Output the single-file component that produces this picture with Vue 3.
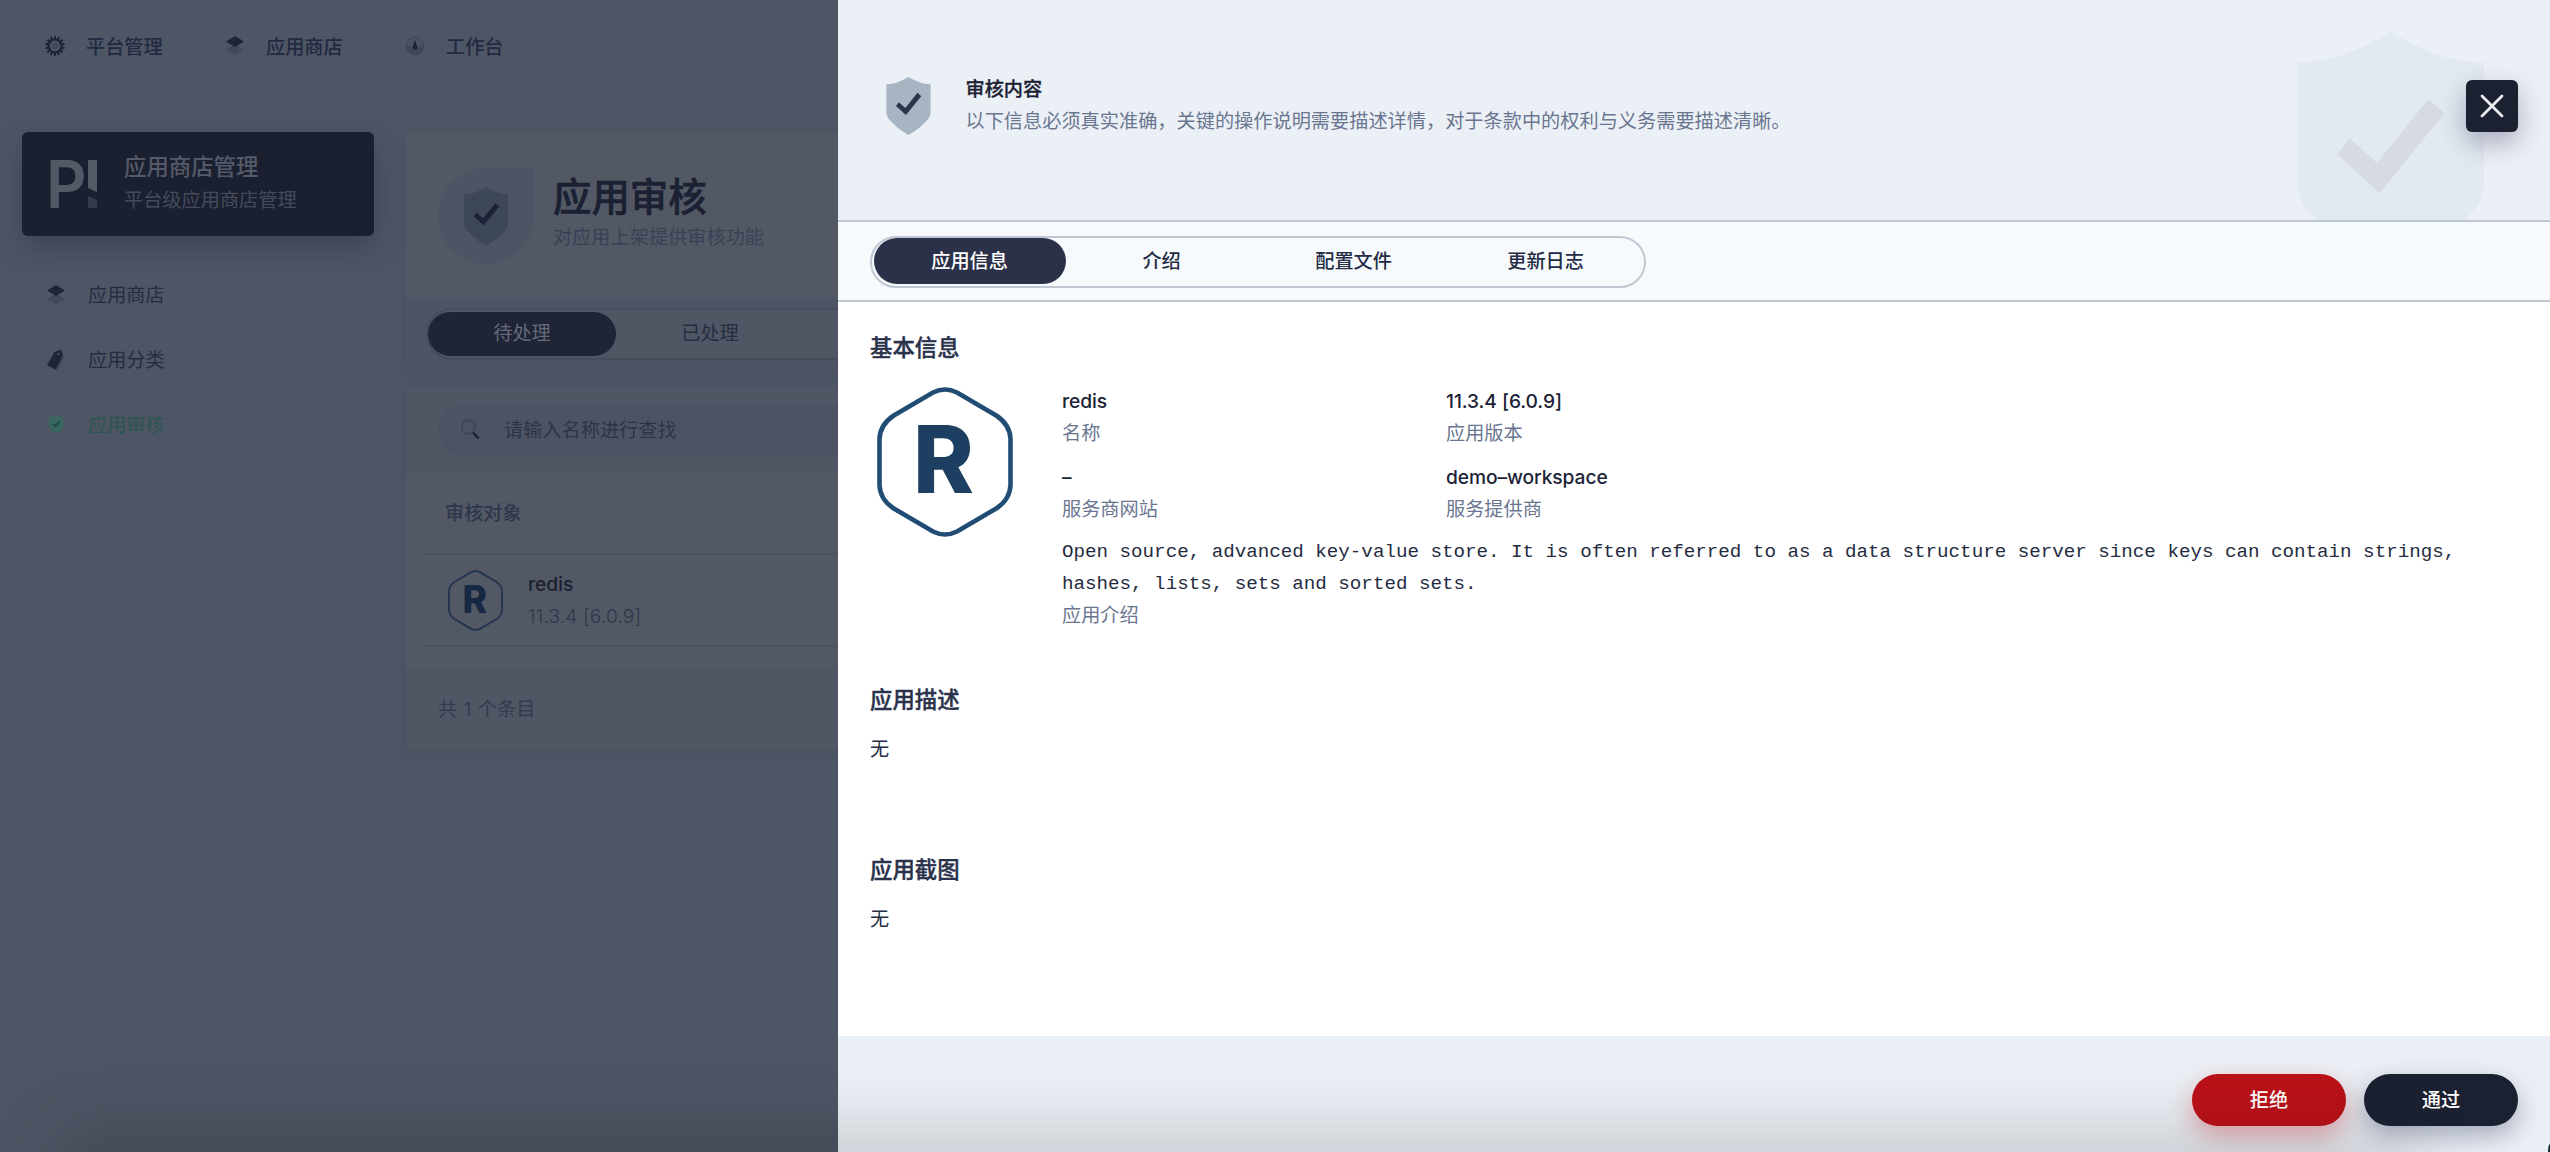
<script setup>
import { h, ref } from 'vue'

const shieldPath =
  'M50 0C38 7 25 13 16 14.6C10 15.8 5 16 0 16.6V81C0 88 4 94.5 10.9 101C20 112 38 125 50 131.3C62 125 80 112 89.1 101C96 94.5 100 88 100 81V16.6C95 16 90 15.8 84 14.6C75 13 62 7 50 0Z'

const ShieldIcon = () =>
  h('svg', { viewBox: '0 0 100 131.3' }, [
    h('path', { d: shieldPath, fill: 'var(--shield)' }),
    h('path', {
      d: 'M21.6 65.4L28.2 56.9L42.8 70.1L70.4 35.8L78.8 43.5L44.2 86.3Z',
      fill: 'var(--check)'
    })
  ])

const LayersIcon = () =>
  h('svg', { viewBox: '0 0 18 20', width: 18, height: 20 }, [
    h('path', { d: 'M9 8.6L18 14L9 19.4L0 14Z', fill: '#414a5b' }),
    h('path', { d: 'M9 0L18 5.5L9 11L0 5.5Z', fill: '#1d2537' })
  ])

const RedisLogo = () =>
  h('svg', { viewBox: '0 0 136 150' }, [
    h('path', {
      d: 'M56 5.5Q68 -.5 80 5.5L120 29Q133 38 133.500 52V98Q133 112 120 121L80 144.500Q68 150.500 56 144.500L16 121Q3 112 2.500 98V52Q3 38 16 29Z',
      fill: 'none',
      stroke: 'var(--hex)',
      'stroke-width': 'var(--hex-w)'
    }),
    h(
      'text',
      {
        x: 66.5,
        y: 105.5,
        'text-anchor': 'middle',
        'font-family': 'Inter, sans-serif',
        'font-weight': 800,
        'font-size': 94,
        textLength: 61,
        lengthAdjust: 'spacingAndGlyphs',
        fill: 'var(--hex-letter)'
      },
      'R'
    )
  ])

const tabs = ['应用信息', '介绍', '配置文件', '更新日志']
const activeTab = ref(0)
const fields = [
  { value: 'redis', label: '名称' },
  { value: '11.3.4 [6.0.9]', label: '应用版本' },
  { value: '–', label: '服务商网站' },
  { value: 'demo–workspace', label: '服务提供商' }
]
const teeth = Array.from({ length: 14 }, (_, i) => (i * 360) / 14)
</script>

<template>
  <div class="screen">
    <header class="topnav">
      <a class="nav-item">
        <svg class="nav-icon" viewBox="-10 -10 20 20">
          <rect v-for="a in teeth" :key="a" x="-1" y="-9.8" width="2" height="4" fill="#1a2234" :transform="`rotate(${a})`" />
          <circle r="6.4" fill="#4e5564" stroke="#1a2234" stroke-width="2" />
          <circle r="3.4" fill="#414a5a" />
        </svg>
        <span>平台管理</span>
      </a>
      <a class="nav-item">
        <span class="nav-icon center"><LayersIcon /></span>
        <span>应用商店</span>
      </a>
      <a class="nav-item">
        <svg class="nav-icon" viewBox="0 0 20 20">
          <circle cx="10" cy="10" r="8.6" fill="#4b5363" stroke="#3e4858" stroke-width="1.2" />
          <path d="M1.200 10H18.800A8.800 8.800 0 0 1 1.200 10Z" fill="#3e4858" />
          <path d="M10 3.800L12.100 10.500A2.300 2.300 0 1 1 7.900 10.500Z" fill="#1b2234" />
        </svg>
        <span>工作台</span>
      </a>
    </header>

    <div class="body">
      <aside class="sidebar">
        <div class="brand">
          <svg class="brand-logo" viewBox="-8 -6 54 60" width="54" height="60">
            <text x="-5" y="48" font-family="Inter, sans-serif" font-weight="600" font-size="66" textLength="40.5" lengthAdjust="spacingAndGlyphs" fill="#545967">P</text>
            <path d="M37 0H46V32L37 28Z" fill="#545967" />
            <path d="M37 36L46 40V48H37Z" fill="#353b4b" />
          </svg>
          <div class="brand-text">
            <div class="brand-title">应用商店管理</div>
            <div class="brand-sub">平台级应用商店管理</div>
          </div>
        </div>
        <nav class="menu">
          <a class="menu-item"><span class="menu-icon"><LayersIcon /></span>应用商店</a>
          <a class="menu-item">
            <span class="menu-icon">
              <svg viewBox="0 0 18 22" width="18" height="22">
                <path d="M13.500 1L17 8.500L10 22L4 19Z" fill="#40495a" />
                <path d="M7.500 3L14 .5L16 6.500L8.700 20.500L0 16.200Z" fill="#1d2537" />
                <circle cx="11.500" cy="5" r="1.100" fill="#565c6a" />
              </svg>
            </span>应用分类
          </a>
          <a class="menu-item active"><span class="menu-icon"><ShieldIcon class="shield-xs" /></span>应用审核</a>
        </nav>
      </aside>

      <main class="main">
        <section class="card head-card">
          <div class="page-head">
            <div class="drop"><ShieldIcon class="shield-sm" /></div>
            <div class="page-title">
              <h1>应用审核</h1>
              <p>对应用上架提供审核功能</p>
            </div>
          </div>
          <div class="page-tabs">
            <div class="page-tabs-pill">
              <span class="on">待处理</span>
              <span>已处理</span>
            </div>
          </div>
        </section>

        <section class="card list-card">
          <div class="search-bar">
            <div class="search">
              <svg viewBox="0 0 20 22" width="20" height="22">
                <circle cx="8.500" cy="8" r="6.800" fill="none" stroke="#3e4656" stroke-width="1.700" />
                <path d="M13 13.500L18.500 19.500" stroke="#1a2032" stroke-width="2.200" />
              </svg>
              <span>请输入名称进行查找</span>
            </div>
          </div>
          <div class="table">
            <div class="thead">审核对象</div>
            <div class="row">
              <RedisLogo class="logo-sm" />
              <div>
                <div class="row-name">redis</div>
                <div class="row-ver">11.3.4 [6.0.9]</div>
              </div>
            </div>
          </div>
          <div class="list-foot">共 1 个条目</div>
        </section>
      </main>
    </div>

    <div class="drawer">
      <div class="drawer-head">
        <ShieldIcon class="shield-bg" />
        <ShieldIcon class="shield-md" />
        <div class="drawer-text">
          <div class="drawer-title">审核内容</div>
          <div class="drawer-sub">以下信息必须真实准确，关键的操作说明需要描述详情，对于条款中的权利与义务需要描述清晰。</div>
        </div>
        <button class="close">
          <svg viewBox="0 0 24 24" width="24" height="24">
            <path d="M2 2L22 22M22 2L2 22" stroke="#eceef0" stroke-width="2.800" stroke-linecap="round" />
          </svg>
        </button>
      </div>

      <div class="drawer-tabs">
        <div class="tabs">
          <span v-for="(t, i) in tabs" :key="t" :class="{ on: i === activeTab }" @click="activeTab = i">{{ t }}</span>
        </div>
      </div>

      <div class="drawer-body">
        <h2>基本信息</h2>
        <div class="info">
          <RedisLogo class="logo-lg" />
          <div class="info-main">
            <div class="grid">
              <div v-for="f in fields" :key="f.label">
                <div class="value">{{ f.value }}</div>
                <div class="label">{{ f.label }}</div>
              </div>
            </div>
            <div class="desc">Open source, advanced key-value store. It is often referred to as a data structure server since keys can contain strings, hashes, lists, sets and sorted sets.</div>
            <div class="label">应用介绍</div>
          </div>
        </div>
        <h2>应用描述</h2>
        <p class="none">无</p>
        <h2>应用截图</h2>
        <p class="none">无</p>
      </div>

      <div class="drawer-foot">
        <button class="btn reject">拒绝</button>
        <button class="btn pass">通过</button>
      </div>
    </div>

    <div class="bottom-shade"></div>
    <div class="corner"></div>
  </div>
</template>

<style>
body {
  margin: 0;
  background: #4e5564;
}
</style>

<style scoped>
.screen {
  position: relative;
  width: 2550px;
  height: 1152px;
  overflow: hidden;
  box-sizing: border-box;
  background: #4e5564;
  font-family: Inter, 'Noto Sans CJK SC', sans-serif;
  font-size: 19.2px;
  line-height: 32px;
  color: #262d41;
}
.screen * {
  box-sizing: border-box;
}
svg {
  display: block;
  flex: none;
}
h1,
h2,
p {
  margin: 0;
}
button {
  border: 0;
  padding: 0;
  font: inherit;
}

.topnav {
  display: flex;
  height: 100px;
  padding: 31px 0 0 45px;
  border-bottom: 2px solid #4b5262;
}
.nav-item {
  display: flex;
  align-items: center;
  gap: 21px;
  width: 180px;
  height: 32px;
  font-weight: 500;
  color: #222940;
}
.nav-icon {
  width: 20px;
  height: 20px;
  margin-top: -2px;
  flex: none;
}
.center {
  display: flex;
  justify-content: center;
}

.body {
  display: flex;
  gap: 32px;
  padding: 32px 0 0 22px;
}
.sidebar {
  width: 352px;
  flex: none;
}
.brand {
  display: flex;
  align-items: center;
  gap: 27px;
  height: 104px;
  padding-left: 21px;
  border-radius: 6px;
  background: #1b2030;
  box-shadow: 0 12px 26px rgba(36, 42, 58, 0.38);
}
.brand-text {
  padding-bottom: 3px;
}
.brand-title {
  font-size: 22.4px;
  font-weight: 500;
  color: #555a69;
  line-height: 34px;
}
.brand-sub {
  font-weight: 400;
  color: #454b5a;
  line-height: 32px;
}
.menu {
  padding: 26px 0 0 25px;
}
.menu-item {
  display: flex;
  align-items: center;
  height: 65px;
}
.menu-icon {
  display: flex;
  justify-content: center;
  width: 18px;
  margin-right: 23px;
}
.menu-item.active {
  color: #2b5650;
  --shield: #3a6661;
  --check: #1b4a42;
}
.shield-xs {
  width: 14.5px;
  height: 19px;
}

.main {
  flex: 1;
}
.card {
  background: #525864;
  border-radius: 6px;
  overflow: hidden;
  box-shadow: 0 4px 10px rgba(58, 65, 82, 0.2);
}
.head-card {
  height: 238px;
}
.page-head {
  display: flex;
  align-items: center;
  gap: 19px;
  height: 166px;
  padding: 2px 0 0 32px;
}
.page-title {
  padding-bottom: 6px;
}
.drop {
  display: flex;
  align-items: center;
  justify-content: center;
  width: 96px;
  height: 96px;
  border-radius: 50% 0 50% 50%;
  background: #4e5463;
}
.shield-sm {
  width: 44.7px;
  height: 58.7px;
  --shield: #3e4757;
  --check: #1c2336;
}
h1 {
  font-size: 38.4px;
  font-weight: 500;
  line-height: 48px;
  color: #1b2033;
  -webkit-text-stroke: 0.6px #1b2033;
}
.page-head p {
  font-weight: 400;
  color: #3a4156;
  line-height: 32px;
}
.page-tabs {
  height: 72px;
  padding: 10px 0 0 20px;
  background: #4e5464;
}
.page-tabs-pill {
  display: flex;
  height: 52px;
  width: 1400px;
  border: 2px solid #454c5c;
  border-radius: 26px;
  background: #505664;
}
.page-tabs-pill span {
  width: 188px;
  height: 44px;
  margin-top: 2px;
  border-radius: 22px;
  line-height: 43px;
  text-align: center;
  color: #262d41;
}
.page-tabs-pill .on {
  background: #202437;
  color: #666b78;
}

.list-card {
  height: 362px;
  margin-top: 18px;
}
.search-bar {
  height: 85px;
  padding: 16px 0 0 32px;
  background: #505664;
}
.search {
  display: flex;
  align-items: center;
  gap: 24px;
  height: 52px;
  padding-left: 22px;
  padding-bottom: 1px;
  border-radius: 26px 0 0 26px;
  background: #4d5363;
  color: #2d3448;
  font-weight: 400;
}
.table {
  height: 195px;
  padding-left: 18px;
}
.thead {
  height: 82px;
  line-height: 80px;
  padding-left: 21px;
  font-weight: 500;
  color: #2f364b;
  border-bottom: 2px solid #4c5260;
  margin-top: 0;
}
.row {
  display: flex;
  align-items: center;
  gap: 25px;
  height: 92px;
  padding-left: 24px;
  border-bottom: 2px solid #4c5260;
}
.logo-sm {
  width: 55px;
  height: 61px;
  --hex: #22344f;
  --hex-w: 4.5px;
  --hex-letter: #172844;
}
.row-name {
  font-weight: 500;
  color: #1b2032;
}
.row-ver {
  font-weight: 300;
  color: #30374b;
  letter-spacing: 0.13px;
}
.list-foot {
  height: 82px;
  line-height: 82px;
  padding-left: 32px;
  background: #505664;
  font-weight: 400;
  color: #343b4f;
  word-spacing: 1px;
}

.drawer {
  position: absolute;
  top: 0;
  right: 0;
  width: 1712px;
  height: 1152px;
  display: flex;
  flex-direction: column;
  background: #fff;
}
.drawer-head {
  position: relative;
  display: flex;
  height: 222px;
  padding: 0 32px 0 48px;
  background: #ebf0f6;
  border-bottom: 2px solid #bfc7d2;
  overflow: hidden;
}
.shield-bg {
  position: absolute;
  top: 32px;
  right: 66.5px;
  width: 187px;
  height: 245.5px;
  --shield: #e2e9f0;
  --check: #d6dae3;
}
.shield-md {
  width: 45px;
  height: 58px;
  margin-top: 77px;
  margin-left: -0.5px;
  --shield: #a7b4c1;
  --check: #2a3549;
}
.drawer-text {
  flex: 1;
  padding: 73px 0 0 35px;
}
.drawer-title {
  font-weight: 500;
  color: #1b2132;
  -webkit-text-stroke: 0.3px #1b2132;
}
.drawer-sub {
  font-weight: 400;
  color: #6a7690;
}
.close {
  position: relative;
  display: flex;
  align-items: center;
  justify-content: center;
  width: 52px;
  height: 52px;
  margin-top: 80px;
  border-radius: 6px;
  background: #1b2131;
  box-shadow: 0 11px 26px rgba(54, 52, 88, 0.36);
}
.drawer-tabs {
  height: 80px;
  padding: 14px 32px 0;
  background: #f7fafd;
  border-bottom: 2px solid #bfc7d2;
}
.tabs {
  display: flex;
  width: 776px;
  height: 52px;
  padding-left: 1.600px;
  border: 2px solid #bfc7d2;
  border-radius: 26px;
}
.tabs span {
  width: 192px;
  height: 46px;
  border-radius: 23px;
  line-height: 46px;
  text-align: center;
  font-weight: 500;
  color: #242c45;
}
.tabs .on {
  background: #2a3149;
  color: #fff;
}
.drawer-body {
  flex: 1;
  padding: 28px 32px 0;
}
h2 {
  height: 36px;
  line-height: 36px;
  font-size: 22.4px;
  font-weight: 500;
  color: #2a324b;
  -webkit-text-stroke: 0.4px #2a324b;
}
.info {
  display: flex;
  gap: 49px;
  height: 316px;
  padding: 19px 0 0 7px;
}
.logo-lg {
  width: 136px;
  height: 150px;
  margin-top: 2px;
  --hex: #214d74;
  --hex-w: 4.6px;
  --hex-letter: #1c3f62;
}
.info-main {
  flex: 1;
}
.grid {
  display: grid;
  grid-template-columns: 384px 384px;
  row-gap: 12px;
}
.value {
  font-weight: 500;
  color: #1c2336;
  letter-spacing: -0.07px;
}
.label {
  font-weight: 400;
  color: #6a7690;
}
.desc {
  height: 74px;
  padding-top: 11px;
  margin-bottom: 0;
  font-family: 'Liberation Mono', monospace;
  color: #252c41;
}
.none {
  height: 134px;
  padding-top: 15px;
  color: #252d42;
}
.drawer-foot {
  display: flex;
  justify-content: flex-end;
  gap: 18px;
  height: 116px;
  padding: 38px 32px 0 0;
  background: #ebf0f6;
}
.btn {
  width: 154px;
  height: 52px;
  border-radius: 26px;
  line-height: 51px;
  font-weight: 500;
  color: #fff;
}
.reject {
  background: #bb1219;
  box-shadow: 0 10px 26px rgba(214, 60, 66, 0.4);
}
.pass {
  background: #1b2131;
  box-shadow: 0 10px 26px rgba(62, 68, 100, 0.4);
}
.bottom-shade {
  position: absolute;
  left: 70px;
  right: 150px;
  top: 1152px;
  height: 40px;
  box-shadow: 0 0 80px 8px rgba(0, 0, 0, 0.24);
  pointer-events: none;
}
.corner {
  position: absolute;
  right: 0;
  bottom: 0;
  width: 2px;
  height: 8px;
  border-top-left-radius: 2px 8px;
  background: #16302f;
}
</style>
